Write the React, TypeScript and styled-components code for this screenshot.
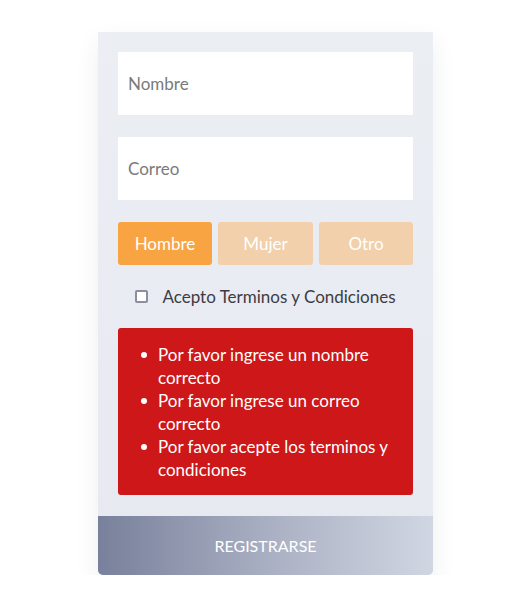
import React from "react";
import styled, { createGlobalStyle } from "styled-components";

const Global = createGlobalStyle`
  html, body { margin: 0; padding: 0; background: #ffffff; }
  body { font-family: Lato, "Noto Sans", sans-serif; }
  * { box-sizing: border-box; }
`;

const Page = styled.div`
  display: flex;
  justify-content: center;
  padding-top: 32px;
  padding-left: 1px;
`;

const Card = styled.form`
  width: 335px;
  display: flex;
  flex-direction: column;
  border-radius: 0 0 5px 5px;
  box-shadow: 0 10px 25px rgba(40, 50, 80, 0.08);
  background: linear-gradient(180deg, #ebeef3 0%, #e6e9f0 100%);
`;

const Body = styled.div`
  padding: 20px 20px 21px;
  display: flex;
  flex-direction: column;
`;

const Input = styled.input`
  height: 63px;
  width: 100%;
  border: none;
  outline: none;
  background: #ffffff;
  padding: 0 10px;
  font-family: inherit;
  font-size: 17px;
  color: #333;
  margin-bottom: 22px;
  &::placeholder { color: #7a7a7a; }
`;

const Genders = styled.div`
  display: grid;
  grid-template-columns: 94px 95px 94px;
  gap: 6px;
`;

const GenderButton = styled.button<{ $active?: boolean }>`
  height: 43px;
  border: none;
  border-radius: 3px;
  background: ${(p) => (p.$active ? "#f9a443" : "#f1d0ab")};
  color: #ffffff;
  font-family: inherit;
  font-size: 17px;
  padding: 0;
`;

const CheckRow = styled.label`
  display: flex;
  align-items: center;
  justify-content: center;
  gap: 14px;
  height: 63px;
  font-size: 17px;
  color: #3c3c44;
`;

const Box = styled.span`
  width: 13px;
  height: 13px;
  border: 2px solid #8b8e9c;
  border-radius: 2px;
  background: #fff;
`;

const Errors = styled.ul`
  margin: 0;
  background: #cd1719;
  border-radius: 3px;
  color: #ffffff;
  padding: 15px 16px 14px 40px;
  font-size: 17px;
  line-height: 23px;
  list-style: none;
`;

const ErrorItem = styled.li`
  position: relative;
  &::before {
    content: "";
    position: absolute;
    left: -17px;
    top: 9px;
    width: 6px;
    height: 6px;
    border-radius: 50%;
    background: #ffffff;
  }
`;

const Submit = styled.button`
  height: 59px;
  border: none;
  border-radius: 0 0 5px 5px;
  background: linear-gradient(90deg, #78809b 0%, #a9afc2 50%, #d1d6e3 100%);
  color: #ffffff;
  font-family: inherit;
  font-size: 16px;
`;

export default function App() {
  return (
    <>
      <Global />
      <Page>
        <Card onSubmit={(e) => e.preventDefault()}>
          <Body>
            <Input placeholder="Nombre" />
            <Input placeholder="Correo" />
            <Genders>
              <GenderButton type="button" $active>Hombre</GenderButton>
              <GenderButton type="button">Mujer</GenderButton>
              <GenderButton type="button">Otro</GenderButton>
            </Genders>
            <CheckRow>
              <Box />
              Acepto Terminos y Condiciones
            </CheckRow>
            <Errors>
              <ErrorItem>Por favor ingrese un nombre correcto</ErrorItem>
              <ErrorItem>Por favor ingrese un correo correcto</ErrorItem>
              <ErrorItem>Por favor acepte los terminos y condiciones</ErrorItem>
            </Errors>
          </Body>
          <Submit type="submit">REGISTRARSE</Submit>
        </Card>
      </Page>
    </>
  );
}
